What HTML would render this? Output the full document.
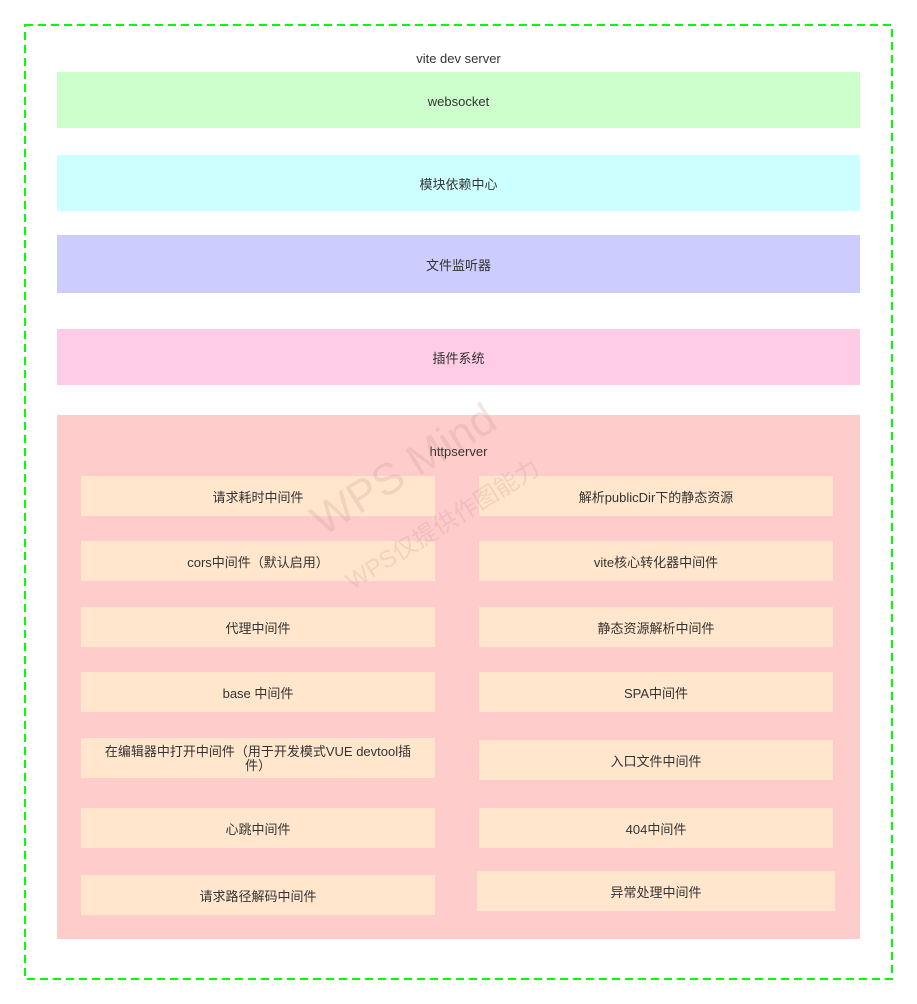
<!DOCTYPE html>
<html><head><meta charset="utf-8"><style>
body{margin:0;width:917px;height:1004px;background:#fff;position:relative;overflow:hidden;font-family:"Liberation Sans","Noto Sans CJK SC",sans-serif;font-size:13px;color:#333}
.b{position:absolute;display:flex;align-items:center;justify-content:center;text-align:center;line-height:14px;padding-top:4px;box-sizing:border-box}
.i{background:#ffe6cc}
</style></head><body>
<svg style="position:absolute;left:0;top:0" width="917" height="1004"><rect x="25" y="25" width="867" height="954" fill="none" stroke="#00ff00" stroke-width="2" stroke-dasharray="8 5"/></svg>
<div class="b" style="left:57px;top:47px;width:803px;height:20px">vite dev server</div>
<div class="b" style="left:57px;top:72px;width:803px;height:56px;background:#ccffcc">websocket</div>
<div class="b" style="left:57px;top:155px;width:803px;height:56px;background:#ccffff">模块依赖中心</div>
<div class="b" style="left:57px;top:235px;width:803px;height:58px;background:#ccccff">文件监听器</div>
<div class="b" style="left:57px;top:329px;width:803px;height:56px;background:#ffcce6">插件系统</div>
<div style="position:absolute;left:57px;top:415px;width:803px;height:524px;background:#ffcccc"></div>
<div class="b" style="left:57px;top:440px;width:803px;height:20px">httpserver</div>
<div class="b i" style="left:81px;top:476px;width:354px;height:40px">请求耗时中间件</div>
<div class="b i" style="left:479px;top:476px;width:354px;height:40px">解析publicDir下的静态资源</div>
<div class="b i" style="left:81px;top:541px;width:354px;height:40px">cors中间件（默认启用）</div>
<div class="b i" style="left:479px;top:541px;width:354px;height:40px">vite核心转化器中间件</div>
<div class="b i" style="left:81px;top:607px;width:354px;height:40px">代理中间件</div>
<div class="b i" style="left:479px;top:607px;width:354px;height:40px">静态资源解析中间件</div>
<div class="b i" style="left:81px;top:672px;width:354px;height:40px">base 中间件</div>
<div class="b i" style="left:479px;top:672px;width:354px;height:40px">SPA中间件</div>
<div class="b i" style="left:81px;top:738px;width:354px;height:40px;padding:2px 20px 0">在编辑器中打开中间件（用于开发模式VUE devtool插件）</div>
<div class="b i" style="left:479px;top:740px;width:354px;height:40px">入口文件中间件</div>
<div class="b i" style="left:81px;top:808px;width:354px;height:40px">心跳中间件</div>
<div class="b i" style="left:479px;top:808px;width:354px;height:40px">404中间件</div>
<div class="b i" style="left:81px;top:875px;width:354px;height:40px">请求路径解码中间件</div>
<div class="b i" style="left:477px;top:871px;width:358px;height:40px">异常处理中间件</div>
<div style="position:absolute;left:300px;top:445px;transform:rotate(-32deg);color:rgba(190,140,140,0.22);font-size:44px;white-space:nowrap">WPS Mind</div>
<div style="position:absolute;left:330px;top:505px;transform:rotate(-32deg);color:rgba(190,140,140,0.22);font-size:24px;white-space:nowrap">WPS仅提供作图能力</div>
</body></html>
